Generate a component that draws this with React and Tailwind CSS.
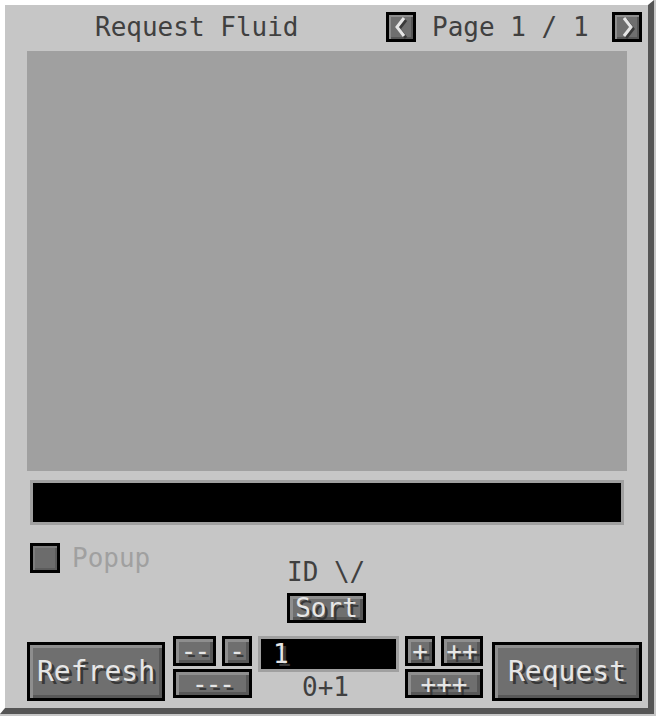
import React from "react";

const McButton = ({ className = "", children, textClass = "" }) => (
  <div className={`bg-black p-[3px] shrink-0 ${className}`}>
    <div
      className={`w-full h-full bg-[#6f6f6f] shadow-[inset_3px_3px_0_#8e8e8e,inset_-3px_-3px_0_#575757] flex items-center justify-center text-[#e6e6e6] [text-shadow:3px_3px_0_#383838] leading-none ${textClass}`}
    >
      {children}
    </div>
  </div>
);

const Arrow = ({ dir }) => {
  const pts = dir === "left" ? "15,3 8,12 15,21" : "9,3 16,12 9,21";
  const sh = dir === "left" ? "17,5 10,14 17,23" : "11,5 18,14 11,23";
  return (
    <div className="w-[30px] h-[30px] bg-black p-[3px] shrink-0">
      <div className="w-full h-full bg-[#6f6f6f] shadow-[inset_2px_2px_0_#8e8e8e,inset_-2px_-2px_0_#575757]">
        <svg width="24" height="24" viewBox="0 0 24 24">
          <polyline points={sh} fill="none" stroke="#3a3a3a" strokeWidth="3" strokeLinejoin="miter" />
          <polyline points={pts} fill="none" stroke="#e6e6e6" strokeWidth="3" strokeLinejoin="miter" />
        </svg>
      </div>
    </div>
  );
};

export default function App() {
  return (
    <div className="w-[656px] h-[716px] bg-[#c6c6c6] pr-[2px] pb-[2px] font-['DejaVu_Sans_Mono',monospace] text-[26px]">
      <div className="w-full h-full bg-[#c6c6c6] border-t-[5px] border-l-[5px] border-r-[6px] border-b-[6px] border-t-white border-l-white border-r-[#555555] border-b-[#555555]">
        {/* Header */}
        <div className="mt-[7px] h-[30px] flex items-center">
          <div className="ml-[90px] leading-[30px] text-[#404040] whitespace-pre">Request Fluid</div>
          <div className="ml-auto mr-[6px] flex items-center">
            <Arrow dir="left" />
            <div className="ml-[16px] w-[162px] leading-[30px] text-[#404040] whitespace-pre">Page 1 / 1</div>
            <div className="ml-[18px]">
              <Arrow dir="right" />
            </div>
          </div>
        </div>

        {/* List area */}
        <div className="mt-[9px] ml-[22px] w-[600px] h-[420px] bg-[#a0a0a0]" />

        {/* Search */}
        <div className="mt-[9px] ml-[25px] w-[594px] h-[45px] border-[3px] border-[#a0a0a0] bg-black" />

        {/* Popup + sort */}
        <div className="mt-[18px] flex items-start">
          <div className="w-[282px] flex items-start">
            <div className="ml-[25px] w-[30px] h-[30px] bg-black p-[3px]">
              <div className="w-full h-full bg-[#6c6c6c] shadow-[inset_2px_2px_0_#7c7c7c,inset_-2px_-2px_0_#5c5c5c]" />
            </div>
            <div className="ml-[12px] leading-[30px] text-[#a0a0a0]">Popup</div>
          </div>
          <div className="flex flex-col items-start">
            <div className="mt-[14px] leading-[30px] text-[#404040] whitespace-pre">ID \/</div>
            <McButton className="mt-[6px] w-[79px] h-[30px]">Sort</McButton>
          </div>
        </div>

        {/* Bottom controls */}
        <div className="mt-[13px] flex items-start">
          <McButton className="ml-[22px] mt-[6px] w-[138px] h-[59px]" textClass="text-[28px]">Refresh</McButton>

          <div className="ml-[8px] flex flex-col gap-[3px]">
            <div className="flex gap-[6px]">
              <McButton className="w-[43px] h-[30px]" textClass="tracking-[-2px]">--</McButton>
              <McButton className="w-[30px] h-[30px]">-</McButton>
            </div>
            <McButton className="w-[79px] h-[29px]" textClass="tracking-[-2px]">---</McButton>
          </div>

          <div className="ml-[6px] w-[141px] flex flex-col">
            <div className="h-[36px] border-[3px] border-[#a0a0a0] bg-black pl-[12px] leading-[30px] text-[#e6e6e6] [text-shadow:3px_3px_0_#383838]">1</div>
            <div className="leading-[30px] text-center text-[#404040] pr-[6px]">0+1</div>
          </div>

          <div className="ml-[6px] flex flex-col gap-[3px]">
            <div className="flex gap-[6px]">
              <McButton className="w-[30px] h-[30px]">+</McButton>
              <McButton className="w-[42px] h-[30px]">++</McButton>
            </div>
            <McButton className="w-[78px] h-[29px]">+++</McButton>
          </div>

          <McButton className="ml-[9px] mt-[6px] w-[150px] h-[59px]" textClass="text-[28px]">Request</McButton>
        </div>
      </div>
    </div>
  );
}
